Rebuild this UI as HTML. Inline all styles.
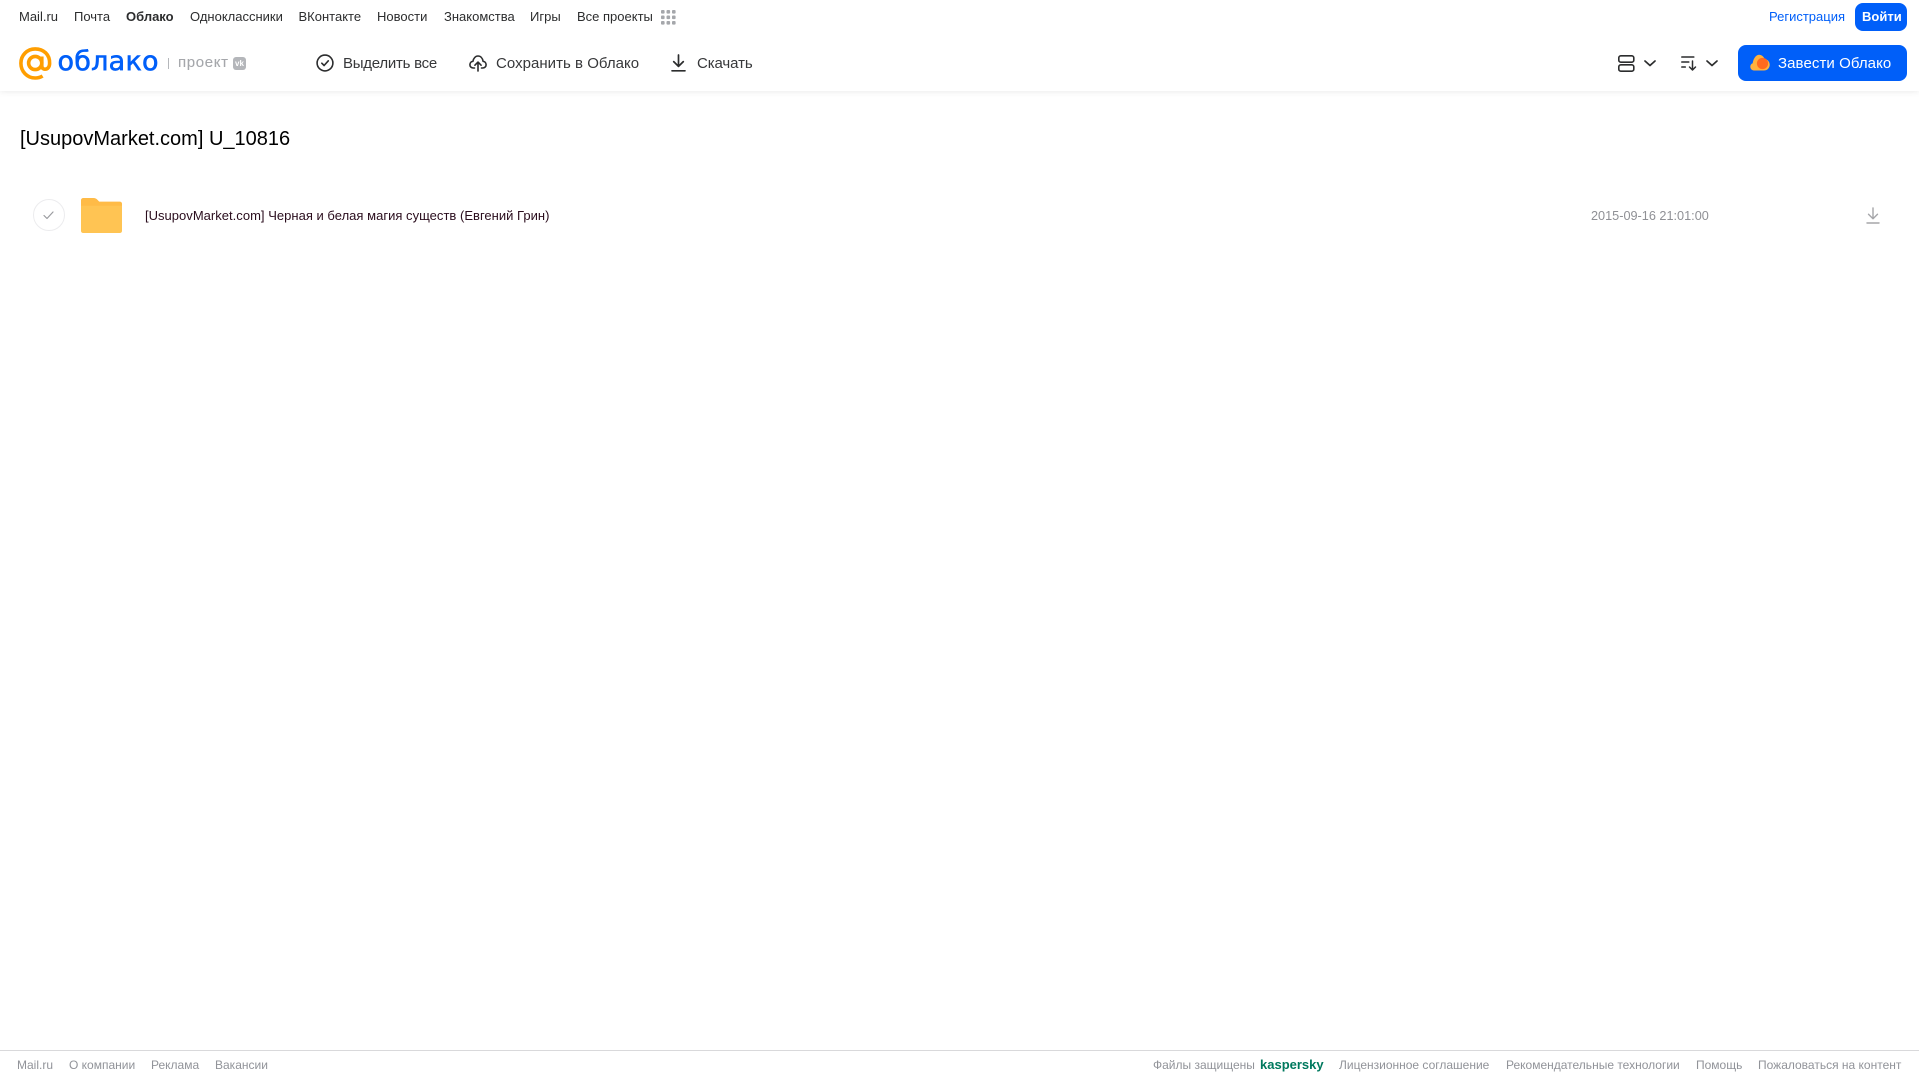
<!DOCTYPE html>
<html lang="ru"><head><meta charset="utf-8"><title>Облако</title>
<style>
html,body{margin:0;padding:0;background:#fff;width:1919px;height:1079px;overflow:hidden}
body{position:relative;font-family:"Liberation Sans",Arial,sans-serif}
.t{position:absolute;white-space:nowrap;line-height:20px;height:20px}
.n{top:7px;font-size:13px;color:#2c2d2e}
.a{top:54px;font-size:15px;color:#37383a}
.f{top:1055px;font-size:12px;color:#919399}
svg{position:absolute;overflow:visible}
#hd{position:absolute;left:0;top:0;width:1919px;height:91px;background:#fff;box-shadow:0 1px 6px rgba(0,0,0,.08)}
</style></head><body>
<div id="hd"></div>

<span class="t n" style="left:19px">Mail.ru</span>
<span class="t n" style="left:74px">Почта</span>
<span class="t n" style="left:126px;font-weight:bold">Облако</span>
<span class="t n" style="left:190px">Одноклассники</span>
<span class="t n" style="left:298.500px">ВКонтакте</span>
<span class="t n" style="left:377px">Новости</span>
<span class="t n" style="left:444px">Знакомства</span>
<span class="t n" style="left:530px">Игры</span>
<span class="t n" style="left:577px">Все проекты</span>
<svg style="left:661px;top:10px" width="15" height="15" fill="#a5a7ab">
<rect x="0" y="0" width="3.6" height="3.6" rx="1"/><rect x="5.5" y="0" width="3.6" height="3.6" rx="1"/><rect x="11" y="0" width="3.6" height="3.6" rx="1"/>
<rect x="0" y="5.5" width="3.6" height="3.6" rx="1"/><rect x="5.5" y="5.5" width="3.6" height="3.6" rx="1"/><rect x="11" y="5.5" width="3.6" height="3.6" rx="1"/>
<rect x="0" y="11" width="3.6" height="3.6" rx="1"/><rect x="5.5" y="11" width="3.6" height="3.6" rx="1"/><rect x="11" y="11" width="3.6" height="3.6" rx="1"/>
</svg>

<span class="t n" style="left:1769px;color:#005ff9">Регистрация</span>
<div style="position:absolute;left:1855px;top:3px;width:52px;height:28px;border-radius:8px;background:#005ff9"></div>
<span class="t n" style="left:1862px;color:#fff;font-weight:bold">Войти</span>

<!-- logo -->
<svg style="left:19px;top:47px" width="33" height="33" viewBox="0 0 33 33" fill="none" stroke="#ff9e00" stroke-width="3.6">
<circle cx="16.2" cy="16" r="6.6"/>
<path d="M22.8 9.500v9.500c0 4.600 7.600 4.600 7.800-2.400C31 7.500 24.500 1.900 16.200 1.900 8.200 1.900 1.900 8.200 1.900 16.200c0 8.300 6.300 14.800 14.300 14.800 2.900 0 5.300-.7 7.400-2"/>
</svg>
<span class="t" style="left:57.500px;top:47px;height:30px;line-height:30px;font-family:'DejaVu Sans',sans-serif;font-size:27px;color:#005ff9;-webkit-text-stroke:.6px #005ff9;letter-spacing:.25px">облако</span>
<div style="position:absolute;left:168px;top:58px;width:1px;height:11px;background:#b5b7bb"></div>
<span class="t" style="left:178px;top:53px;font-size:15px;color:#a5a7ab;letter-spacing:.65px;-webkit-text-stroke:.1px #a5a7ab">проект</span>
<div style="position:absolute;left:233px;top:57px;width:13px;height:13px;border-radius:3px;background:#b4b6ba;color:#fff;font:bold 8px/13px 'Liberation Sans',sans-serif;text-align:center">vk</div>

<!-- actions -->
<svg style="left:316px;top:54px" width="18" height="18" viewBox="0 0 18 18" fill="none" stroke="#2c2d2e" stroke-width="1.6" stroke-linecap="round" stroke-linejoin="round">
<circle cx="9" cy="9" r="7.900"/><path d="M5.800 9.200l2.300 2.300 4.200-4.700"/>
</svg>
<span class="t a" style="left:343px;letter-spacing:-.25px">Выделить все</span>
<svg style="left:469px;top:54px" width="18" height="18" viewBox="0 0 18 18" fill="none" stroke="#2c2d2e" stroke-width="1.6" stroke-linecap="round" stroke-linejoin="round">
<path d="M5.500 14H4.300C2.300 14 .9 12.500.9 10.700c0-1.800 1.300-3.200 3-3.400C4.500 4.200 6.500 2 9 2s4.500 2 5.100 5.300c1.700.2 3 1.600 3 3.400 0 1.800-1.400 3.300-3.400 3.300h-1.200"/>
<path d="M9 17V8.300M5.900 11.200L9 8.100l3.100 3.100"/>
</svg>
<span class="t a" style="left:496px;letter-spacing:.03px">Сохранить в Облако</span>
<svg style="left:671px;top:54px" width="15" height="18" viewBox="0 0 15 18" fill="none" stroke="#2c2d2e" stroke-width="1.700" stroke-linecap="round" stroke-linejoin="round">
<path d="M7.500 1v11M2.700 7.600l4.800 4.800 4.800-4.800M1 16.800h13"/>
</svg>
<span class="t a" style="left:697px;letter-spacing:-.1px">Скачать</span>

<!-- right controls -->
<svg style="left:1618px;top:55px" width="17" height="17" viewBox="0 0 17 17" fill="none" stroke="#2c2d2e" stroke-width="1.600">
<rect x=".8" y=".8" width="15" height="6.400" rx="2"/><rect x=".8" y="9.800" width="15" height="6.400" rx="2"/>
</svg>
<svg style="left:1644px;top:60px" width="12" height="7" viewBox="0 0 12 7" fill="none" stroke="#2c2d2e" stroke-width="1.700" stroke-linecap="round" stroke-linejoin="round"><path d="M1 1l5 4.500L11 1"/></svg>
<svg style="left:1681px;top:56px" width="16" height="15" viewBox="0 0 16 15" fill="none" stroke="#2c2d2e" stroke-width="1.500" stroke-linecap="round" stroke-linejoin="round">
<path d="M.8 1h12M.8 6h7M.8 11h3.500M11.500 5v9M8.500 11l3 3 3-3"/>
</svg>
<svg style="left:1706px;top:60px" width="12" height="7" viewBox="0 0 12 7" fill="none" stroke="#2c2d2e" stroke-width="1.700" stroke-linecap="round" stroke-linejoin="round"><path d="M1 1l5 4.500L11 1"/></svg>

<div style="position:absolute;left:1738px;top:45px;width:169px;height:36px;border-radius:8px;background:#005ff9"></div>
<svg style="left:1750px;top:54px" width="20" height="17" viewBox="0 0 20 17">
<path fill="#ffb13d" d="M4 16.500C1.800 16.500 .3 14.800.3 12.800c0-1.700 1-3 2.400-3.500C3 5.800 5.500 .8 9 .8c2.700 0 4.800 1.800 5.400 4.200 3 .2 5.300 2.600 5.300 5.700 0 3.300-2.500 5.800-5.800 5.800z"/>
<circle cx="12.500" cy="9.500" r="5.600" fill="#ff6a1f"/>
</svg>
<span class="t a" style="left:1778px;color:#fff;letter-spacing:.08px">Завести Облако</span>

<!-- title -->
<span class="t" style="left:20px;top:126.500px;height:24px;line-height:24px;font-size:20px;color:#000">[UsupovMarket.com] U_10816</span>

<!-- row -->
<div style="position:absolute;left:33px;top:199px;width:30px;height:30px;border:1px solid #ececee;border-radius:50%"></div>
<svg style="left:43px;top:211px" width="11" height="9" viewBox="0 0 11 9" fill="none" stroke="#9a9b9f" stroke-width="1.200" stroke-linecap="round" stroke-linejoin="round"><path d="M1 4.500l3 3 6-6.500"/></svg>
<svg style="left:81px;top:198px" width="41" height="35" viewBox="0 0 36 34" preserveAspectRatio="none">
<path fill="#ffbb47" d="M2 0h9c1.500 0 2.500.6 3.500 1.800L16 3.500h18c1.200 0 2 .8 2 2V31c0 1.700-1.300 3-3 3H3c-1.700 0-3-1.300-3-3V2C0 .9.900 0 2 0z"/>
<path fill="#ffc453" d="M0 7.500h36v24.500c0 1.100-.9 2-2 2H2c-1.100 0-2-.9-2-2z"/>
</svg>
<span class="t" style="left:145px;top:206px;font-size:13px;color:#2a0d1d;letter-spacing:.02px">[UsupovMarket.com] Черная и белая магия существ (Евгений Грин)</span>
<span class="t" style="left:1591px;top:205.500px;font-size:12.700px;color:#8f9095">2015-09-16 21:01:00</span>
<svg style="left:1866px;top:207px" width="14" height="17" viewBox="0 0 14 17" fill="none" stroke="#a5a6a9" stroke-width="1.400" stroke-linecap="round" stroke-linejoin="round"><path d="M7 1v10.500M2.500 7.200L7 11.700l4.500-4.500M1 16h12"/></svg>

<!-- footer -->
<div style="position:absolute;left:0;top:1050px;width:1919px;height:1px;background:#d9d9db"></div>
<span class="t f" style="left:17px">Mail.ru</span>
<span class="t f" style="left:69px">О компании</span>
<span class="t f" style="left:151px">Реклама</span>
<span class="t f" style="left:215px">Вакансии</span>
<span class="t f" style="left:1153px">Файлы защищены</span>
<span class="t f" style="left:1260px;color:#00795e;font-weight:bold;font-size:13px">kaspersky</span>
<span class="t f" style="left:1339px">Лицензионное соглашение</span>
<span class="t f" style="left:1506px">Рекомендательные технологии</span>
<span class="t f" style="left:1696px">Помощь</span>
<span class="t f" style="left:1758px">Пожаловаться на контент</span>
</body></html>
